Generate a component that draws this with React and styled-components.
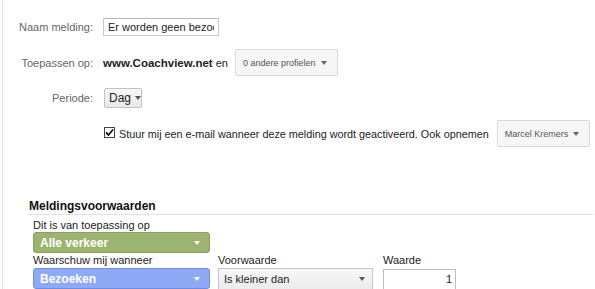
import React from "react";
import styled, { createGlobalStyle } from "styled-components";

const Global = createGlobalStyle`
  html, body { margin: 0; padding: 0; background: #fff; }
  body { font-family: Arial, "Liberation Sans", sans-serif; font-size: 11px; color: #333; }
`;

const Frame = styled.div`
  margin-left: 2px;
  border-left: 1px solid #e4e4e4;
  width: 592px;
  height: 289px;
  overflow: hidden;
  box-sizing: border-box;
`;

const Form = styled.div`
  display: flex;
  flex-direction: column;
  padding-top: 18px;
`;

const Row = styled.div`
  display: flex;
  align-items: center;
  margin-top: ${(p) => p.$mt || 0}px;
  height: ${(p) => p.$h}px;
`;

const Label = styled.div`
  width: 90px;
  text-align: right;
  color: #666;
  font-size: 11px;
  margin-right: ${(p) => p.$gap || 10}px;
  flex: none;
`;

const TextInput = styled.input`
  box-sizing: border-box;
  width: 116px;
  height: 18px;
  border: 1px solid #c8c8c8;
  border-top-color: #b8b8b8;
  padding: 0 4px;
  font-family: Arial, "Liberation Sans", sans-serif;
  font-size: 11px;
  color: #222;
  outline: none;
`;

const Site = styled.span`
  font-weight: bold;
  font-size: 11.5px;
  color: #222;
`;

const En = styled.span`
  font-size: 11px;
  color: #222;
  margin-left: 3px;
  margin-right: 7px;
`;

const Arrow = styled.span`
  display: inline-block;
  width: 0;
  height: 0;
  border-left: ${(p) => p.$s || 3}px solid transparent;
  border-right: ${(p) => p.$s || 3}px solid transparent;
  border-top: ${(p) => (p.$s || 3) + 1}px solid ${(p) => p.$c || "#555"};
`;

const MenuButton = styled.div`
  box-sizing: border-box;
  width: ${(p) => p.$w}px;
  height: 27px;
  display: flex;
  align-items: center;
  justify-content: space-between;
  padding: 0 10px 0 7px;
  background: #f6f6f6;
  border: 1px solid #d9d9d9;
  border-radius: 2px;
  font-size: 9px;
  color: #555;
  white-space: nowrap;
  flex: none;
`;

const DagButton = styled.div`
  box-sizing: border-box;
  margin-left: 1px;
  width: 38px;
  height: 20px;
  display: flex;
  align-items: center;
  gap: 4px;
  padding-left: 4px;
  background: linear-gradient(#f8f8f8, #e9e9e9);
  border: 1px solid #c2c2c2;
  border-radius: 2px;
  font-size: 12px;
  color: #222;
`;

const CheckRow = styled.div`
  display: flex;
  align-items: center;
  margin-top: 12px;
  height: 27px;
  padding-left: 101px;
`;

const Box = styled.span`
  box-sizing: border-box;
  width: 11px;
  height: 11px;
  border: 1px solid #444;
  background: #fff;
  display: inline-flex;
  align-items: center;
  justify-content: center;
  margin-right: 4px;
  margin-top: -2px;
  flex: none;
`;

const CheckText = styled.span`
  font-size: 10.8px;
  color: #222;
  white-space: nowrap;
  margin-right: 8px;
`;

const Section = styled.div`
  margin-top: 52px;
  padding-left: 25px;
`;

const Heading = styled.div`
  font-weight: bold;
  font-size: 12px;
  color: #111;
  line-height: 15px;
  padding-left: 1px;
  border-bottom: 1px solid #e2e2e2;
`;

const Fields = styled.div`
  padding-left: 5px;
  display: flex;
  flex-direction: column;
`;

const FieldLabel = styled.div`
  font-size: 11px;
  color: #222;
  line-height: 14px;
  margin-top: ${(p) => p.$mt || 0}px;
`;

const ColorSelect = styled.div`
  box-sizing: border-box;
  width: 177px;
  height: 21px;
  margin-top: ${(p) => p.$mt || 0}px;
  border-radius: 3px;
  background: ${(p) => p.$bg};
  border: 1px solid ${(p) => p.$bd};
  display: flex;
  align-items: center;
  justify-content: space-between;
  padding: 0 9px 0 6px;
  color: #fff;
  font-weight: bold;
  font-size: 12px;
`;

const CondRow = styled.div`
  display: flex;
  align-items: flex-start;
`;

const Col = styled.div`
  display: flex;
  flex-direction: column;
  margin-left: ${(p) => p.$ml || 0}px;
`;

const GraySelect = styled.div`
  box-sizing: border-box;
  width: 155px;
  height: 22px;
  margin-top: 1px;
  border: 1px solid #c4c4c4;
  background: linear-gradient(#f7f7f7, #ececec);
  display: flex;
  align-items: center;
  justify-content: space-between;
  padding: 0 7px 0 5px;
  font-size: 11px;
  color: #222;
`;

const ValueInput = styled.div`
  box-sizing: border-box;
  width: 73px;
  height: 21px;
  margin-top: 2px;
  border: 1px solid #bdbdbd;
  background: #fff;
  text-align: right;
  padding-right: 3px;
  line-height: 19px;
  font-size: 11px;
  color: #222;
`;

export default function App() {
  return (
    <>
      <Global />
      <Frame>
        <Form>
          <Row $h={18}>
            <Label $gap={10}>Naam melding:</Label>
            <TextInput readOnly value="Er worden geen bezoekers" />
          </Row>
          <Row $h={27} $mt={13}>
            <Label>Toepassen op:</Label>
            <Site>www.Coachview.net</Site>
            <En>en</En>
            <MenuButton $w={103}>
              <span>0 andere profielen</span>
              <Arrow $c="#666" />
            </MenuButton>
          </Row>
          <Row $h={20} $mt={12}>
            <Label>Periode:</Label>
            <DagButton>
              <span>Dag</span>
              <Arrow $c="#555" />
            </DagButton>
          </Row>
          <CheckRow>
            <Box>
              <svg width="9" height="9" viewBox="0 0 9 9">
                <path d="M1 4.5 L3.5 7 L8 1.5" fill="none" stroke="#111" strokeWidth="1.8" />
              </svg>
            </Box>
            <CheckText>
              Stuur mij een e-mail wanneer deze melding wordt geactiveerd. Ook opnemen
            </CheckText>
            <MenuButton $w={93}>
              <span>Marcel Kremers</span>
              <Arrow $c="#666" />
            </MenuButton>
          </CheckRow>
        </Form>
        <Section>
          <Heading>Meldingsvoorwaarden</Heading>
          <Fields>
            <FieldLabel $mt={3}>Dit is van toepassing op</FieldLabel>
            <ColorSelect $bg="#9db470" $bd="#8aa25c">
              <span>Alle verkeer</span>
              <Arrow $c="#fff" />
            </ColorSelect>
            <CondRow>
              <Col>
                <FieldLabel>Waarschuw mij wanneer</FieldLabel>
                <ColorSelect $bg="#8eaaf6" $bd="#6e8ee6" $mt={1}>
                  <span>Bezoeken</span>
                  <Arrow $c="#fff" />
                </ColorSelect>
              </Col>
              <Col $ml={8}>
                <FieldLabel>Voorwaarde</FieldLabel>
                <GraySelect>
                  <span>Is kleiner dan</span>
                  <Arrow $c="#555" />
                </GraySelect>
              </Col>
              <Col $ml={10}>
                <FieldLabel>Waarde</FieldLabel>
                <ValueInput>1</ValueInput>
              </Col>
            </CondRow>
          </Fields>
        </Section>
      </Frame>
    </>
  );
}
